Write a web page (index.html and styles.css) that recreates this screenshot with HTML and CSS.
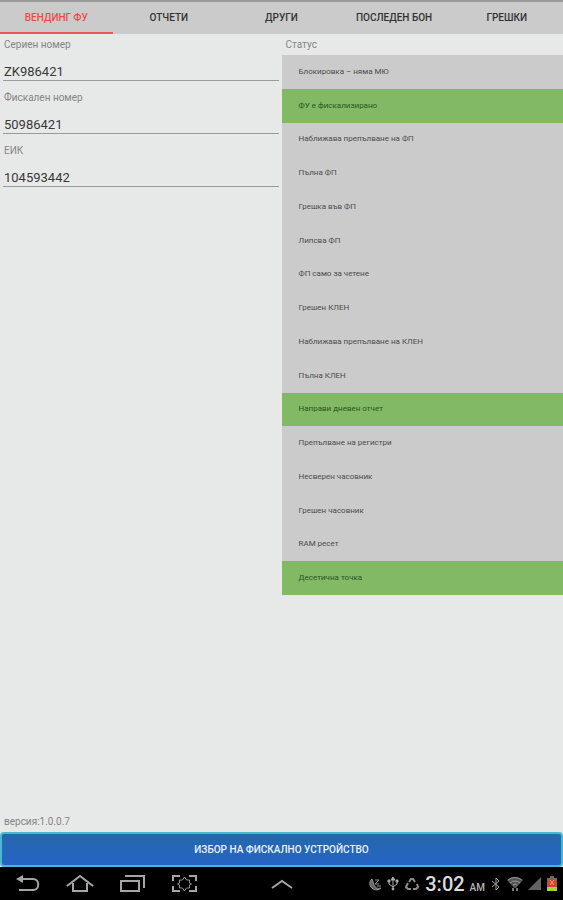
FILE: index.html
```html
<!DOCTYPE html>
<html lang="bg">
<head>
<meta charset="utf-8">
<meta name="viewport" content="width=device-width, initial-scale=1">
<title>Вендинг ФУ</title>
<link rel="stylesheet" href="styles.css">
</head>
<body>
<nav class="tabs">
  <button class="tab tab-active" type="button">ВЕНДИНГ ФУ</button>
  <button class="tab" type="button">ОТЧЕТИ</button>
  <button class="tab" type="button">ДРУГИ</button>
  <button class="tab" type="button">ПОСЛЕДЕН БОН</button>
  <button class="tab" type="button">ГРЕШКИ</button>
</nav>
<main class="content">
  <form class="fields">
    <div class="field"><label class="caption" for="serial">Сериен номер</label><input class="value" id="serial" type="text" value="ZK986421"></div>
    <div class="field"><label class="caption" for="fiscal">Фискален номер</label><input class="value" id="fiscal" type="text" value="50986421"></div>
    <div class="field"><label class="caption" for="eik">ЕИК</label><input class="value" id="eik" type="text" value="104593442"></div>
  </form>
  <section class="status">
    <h2 class="caption">Статус</h2>
    <ul class="list">
      <li class="row">Блокировка – няма МЮ</li>
      <li class="row row-on">ФУ е фискализирано</li>
      <li class="row">Наближава препълване на ФП</li>
      <li class="row">Пълна ФП</li>
      <li class="row">Грешка във ФП</li>
      <li class="row">Липсва ФП</li>
      <li class="row">ФП само за четене</li>
      <li class="row">Грешен КЛЕН</li>
      <li class="row">Наближава препълване на КЛЕН</li>
      <li class="row">Пълна КЛЕН</li>
      <li class="row row-on">Направи дневен отчет</li>
      <li class="row">Препълване на регистри</li>
      <li class="row">Несверен часовник</li>
      <li class="row">Грешен часовник</li>
      <li class="row">RAM ресет</li>
      <li class="row row-on">Десетична точка</li>
    </ul>
  </section>
</main>
<footer class="actions">
  <p class="version">версия:1.0.0.7</p>
  <button class="select-device" type="button">ИЗБОР НА ФИСКАЛНО УСТРОЙСТВО</button>
</footer>
<div class="system-bar">
  <div class="nav-keys">
    <button class="key" type="button" aria-label="Назад"><svg width="30" height="24" viewBox="0 0 30 24"><path d="M8 7h12c7 0 7 11 0 11H6" fill="none" stroke="#a5a5a5" stroke-width="2"/><path d="M3 7l7-4v8z" fill="#a5a5a5"/></svg></button>
    <button class="key" type="button" aria-label="Начало"><svg width="30" height="24" viewBox="0 0 30 24"><path d="M2 14L15 4l13 10M8 11v8h14v-8" fill="none" stroke="#a5a5a5" stroke-width="2"/></svg></button>
    <button class="key" type="button" aria-label="Скорошни"><svg width="30" height="24" viewBox="0 0 30 24"><path d="M4 9h18v10H4zM8 4h19v12" fill="none" stroke="#a5a5a5" stroke-width="2"/></svg></button>
    <button class="key" type="button" aria-label="Снимка на екрана"><svg width="30" height="24" viewBox="0 0 30 24"><path d="M11 4H4v5M20 4h7v5M4 14v5h7M27 14v5h-7" fill="none" stroke="#a5a5a5" stroke-width="2"/><path d="M15.500 5l2 3h3v3l2 1-2 1v3h-3l-2 3-2-3h-3v-3l-2-1 2-1V8h3z" fill="none" stroke="#909090"/></svg></button>
  </div>
  <button class="key" type="button" aria-label="Нагоре"><svg width="24" height="24" viewBox="0 0 24 24"><path d="M2 16l10-7 10 7" fill="none" stroke="#a5a5a5" stroke-width="2"/></svg></button>
  <div class="tray">
    <svg width="14" height="16" viewBox="0 0 14 16" fill="none" stroke="#929292"><path d="M4 3C1 5 1 10 4 12c3 3 7 2 9 0-3 1-6 0-7-3-1-2-1-4-2-6z" fill="#666"/><path d="M7 4h4L7 8h4M9 10h4"/></svg>
    <svg width="12" height="16" viewBox="0 0 12 16" fill="none" stroke="#aaa"><path d="M6 2v11M2 5v3l4 3 4-3V5"/><path d="M4 4l2-3 2 3zM1 4h2v2H1zM9 4h2v2H9z" fill="#aaa"/><circle cx="6" cy="13" r="1" fill="#aaa"/></svg>
    <svg width="16" height="16" viewBox="0 0 16 16" fill="none" stroke="#8c8c8c" stroke-width="2"><path d="M5 6l2-3h2l2 3M13 8l1 3-2 2H9M7 13H4l-2-2 2-4"/></svg>
    <time class="clock">3:02</time><span class="period">AM</span>
    <svg width="12" height="16" viewBox="0 0 12 16" fill="none" stroke="#a0a0a0"><path d="M2 5l7 6-3 3V2l3 3-7 6"/></svg>
    <svg width="16" height="16" viewBox="0 0 16 16"><path d="M0 4q8-6 16 0L9 12H7z" fill="#555"/><path d="M1 4q7-5 14 0M3 7q5-4 10 0M6 9q2-2 4 0" fill="none" stroke="#999"/><path d="M6 15v-3M10 12v3" stroke="#777" stroke-width="2"/></svg>
    <svg width="14" height="16" viewBox="0 0 14 16"><path d="M0 14L13 1v13z" fill="#626262"/></svg>
    <svg width="10" height="16" viewBox="0 0 10 16"><path d="M3 0h4v2h3v13H0V2h3z" fill="#766"/><path d="M1 3h8v8H1z" fill="#dc4030"/><path d="M0 11h10v4H0z" fill="#a9d32e"/><path d="M3 4l4 5M7 4L3 9" stroke="#f2a080"/></svg>
  </div>
</div>
</body>
</html>
```
FILE: styles.css
```css
* { box-sizing: border-box; }

body {
  margin: 0;
  min-height: 100vh;
  display: flex;
  flex-direction: column;
  background: #e7e9e8;
  color: #333;
  font-family: Roboto, "Liberation Sans", sans-serif;
}

button, input { font-family: inherit; }

.tabs {
  display: grid;
  grid-template-columns: repeat(5, 1fr);
  background: #cbcbcb;
  border-top: 2px solid #9b9b9b;
}

.tab {
  height: 32px;
  padding: 2px 0 0;
  border: 0;
  border-bottom: 2px solid transparent;
  background: none;
  color: #333;
  font-size: 10px;
  font-weight: 500;
  line-height: 16px;
  white-space: nowrap;
}

.tab-active { color: #e94b4b; border-bottom-color: #e85656; }

.content {
  flex: 1;
  display: grid;
  grid-template-columns: 1fr 1fr;
  padding-top: 3px;
}

.fields {
  display: flex;
  flex-direction: column;
  gap: 9px;
  padding: 0 3px;
}

.field { display: flex; flex-direction: column; }

.caption {
  margin: 0;
  padding-left: 1px;
  color: #858585;
  font-size: 10px;
  font-weight: 400;
  line-height: 16px;
}

.value {
  width: 100%;
  height: 28px;
  padding: 10px 1px 0;
  border: 0;
  border-bottom: 1px solid #9a9a9a;
  background: none;
  color: #383838;
  font-size: 13px;
}

.status .caption { padding: 0 4px 2px; }

.list {
  display: grid;
  grid-auto-rows: 1fr;
  min-height: 540px;
  margin: 0;
  padding: 0;
  list-style: none;
  background: #cbcbcb;
}

.row {
  display: flex;
  align-items: center;
  padding-left: 17px;
  color: #4c4c4c;
  font-size: 8px;
  line-height: 12px;
}

.row-on { background: #81b965; color: #2c5620; }

.version {
  margin: 0;
  padding-left: 4px;
  color: #858585;
  font-size: 10px;
  line-height: 20px;
}

.select-device {
  display: block;
  width: 100%;
  height: 35px;
  border: 2px solid #48b9d0;
  border-radius: 4px;
  background: linear-gradient(#2468aa, #2764c6);
  color: #e9f2fb;
  font-size: 10px;
  font-weight: 500;
}

.system-bar {
  display: grid;
  grid-template-columns: 1fr auto 1fr;
  align-items: center;
  height: 33px;
  background: #000;
}

.nav-keys { display: flex; gap: 22px; padding-left: 13px; }

.key { padding: 0; border: 0; background: none; line-height: 0; }

.tray {
  display: flex;
  justify-content: flex-end;
  align-items: center;
  gap: 5px;
  padding-right: 6px;
}

.clock { color: #dcdcdc; font-size: 20px; font-weight: 500; line-height: 24px; }

.period { align-self: flex-end; color: #b5b5b5; font-size: 10px; font-weight: 500; line-height: 16px; }
```
